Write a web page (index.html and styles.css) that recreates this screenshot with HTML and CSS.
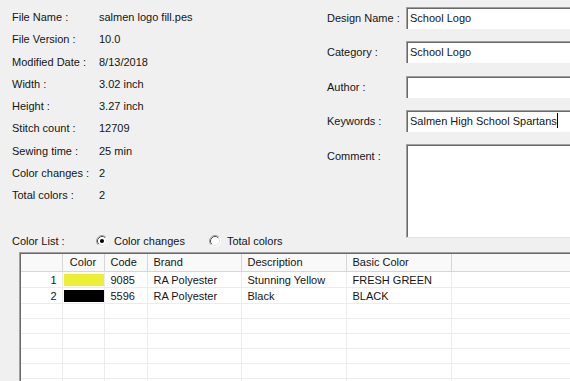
FILE: index.html
```html
<!DOCTYPE html>
<html>
<head>
<meta charset="utf-8">
<link rel="stylesheet" href="styles.css">
</head>
<body>
<div class="top">
  <div class="left">
    <div class="info">
      <div class="row"><span class="lbl">File Name :</span><span>salmen logo fill.pes</span></div>
      <div class="row"><span class="lbl">File Version :</span><span>10.0</span></div>
      <div class="row"><span class="lbl">Modified Date :</span><span>8/13/2018</span></div>
      <div class="row"><span class="lbl">Width :</span><span>3.02 inch</span></div>
      <div class="row"><span class="lbl">Height :</span><span>3.27 inch</span></div>
      <div class="row"><span class="lbl">Stitch count :</span><span>12709</span></div>
      <div class="row"><span class="lbl">Sewing time :</span><span>25 min</span></div>
      <div class="row"><span class="lbl">Color changes :</span><span>2</span></div>
      <div class="row"><span class="lbl">Total colors :</span><span>2</span></div>
    </div>
    <div class="colorlist">
      <span class="cl-lbl">Color List :</span>
      <span class="radio">
        <svg width="12" height="12" viewBox="0 0 12 12">
          <circle cx="6" cy="6" r="5" fill="#fff"/>
          <path d="M2.11 9.89 A5.5 5.5 0 0 1 9.89 2.11" fill="none" stroke="#a0a0a0" stroke-width="1"/>
          <path d="M9.89 2.11 A5.5 5.5 0 0 1 2.11 9.89" fill="none" stroke="#ffffff" stroke-width="1"/>
          <path d="M2.82 9.18 A4.5 4.5 0 0 1 9.18 2.82" fill="none" stroke="#505050" stroke-width="1"/>
          <path d="M9.18 2.82 A4.5 4.5 0 0 1 2.82 9.18" fill="none" stroke="#e3e3e3" stroke-width="1"/>
          <circle cx="6" cy="6" r="2" fill="#000"/>
        </svg>
        Color changes
      </span>
      <span class="radio second">
        <svg width="12" height="12" viewBox="0 0 12 12">
          <circle cx="6" cy="6" r="5" fill="#fff"/>
          <path d="M2.11 9.89 A5.5 5.5 0 0 1 9.89 2.11" fill="none" stroke="#a0a0a0" stroke-width="1"/>
          <path d="M9.89 2.11 A5.5 5.5 0 0 1 2.11 9.89" fill="none" stroke="#ffffff" stroke-width="1"/>
          <path d="M2.82 9.18 A4.5 4.5 0 0 1 9.18 2.82" fill="none" stroke="#505050" stroke-width="1"/>
          <path d="M9.18 2.82 A4.5 4.5 0 0 1 2.82 9.18" fill="none" stroke="#e3e3e3" stroke-width="1"/>
        </svg>
        Total colors
      </span>
    </div>
  </div>
  <div class="form">
    <div class="frow"><span class="flbl">Design Name :</span><div class="input">School Logo</div></div>
    <div class="frow"><span class="flbl">Category :</span><div class="input">School Logo</div></div>
    <div class="frow"><span class="flbl">Author :</span><div class="input"></div></div>
    <div class="frow"><span class="flbl">Keywords :</span><div class="input">Salmen High School Spartans<span class="caret"></span></div></div>
    <div class="frow comment"><span class="flbl">Comment :</span><div class="input area"></div></div>
  </div>
</div>
<div class="list">
  <table>
    <colgroup>
      <col class="c-num"><col class="c-color"><col class="c-code"><col class="c-brand"><col class="c-desc"><col class="c-basic"><col class="c-fill">
    </colgroup>
    <thead>
      <tr><th></th><th class="center">Color</th><th>Code</th><th>Brand</th><th>Description</th><th>Basic Color</th><th></th></tr>
    </thead>
    <tbody>
      <tr><td class="num">1</td><td class="sw"><div class="swatch yellow"></div></td><td>9085</td><td>RA Polyester</td><td>Stunning Yellow</td><td>FRESH GREEN</td><td></td></tr>
      <tr><td class="num">2</td><td class="sw"><div class="swatch black"></div></td><td>5596</td><td>RA Polyester</td><td>Black</td><td>BLACK</td><td></td></tr>
      <tr><td></td><td></td><td></td><td></td><td></td><td></td><td></td></tr>
      <tr><td></td><td></td><td></td><td></td><td></td><td></td><td></td></tr>
      <tr><td></td><td></td><td></td><td></td><td></td><td></td><td></td></tr>
      <tr><td></td><td></td><td></td><td></td><td></td><td></td><td></td></tr>
      <tr><td></td><td></td><td></td><td></td><td></td><td></td><td></td></tr>
      <tr><td></td><td></td><td></td><td></td><td></td><td></td><td></td></tr>
    </tbody>
  </table>
</div>
</body>
</html>
```
FILE: styles.css
```css
html, body {
  margin: 0;
  padding: 0;
  overflow: hidden;
  width: 570px;
  height: 381px;
  background: #f0f0f0;
}
body {
  font-family: "Liberation Sans", Arial, sans-serif;
  font-size: 11px;
  color: #151515;
}
.top {
  display: flex;
  height: 252px;
}
.left {
  flex: none;
  width: 315px;
  padding-left: 12px;
  display: flex;
  flex-direction: column;
}
.info {
  padding-top: 6px;
}
.row {
  display: flex;
  height: 22.25px;
  line-height: 22.25px;
}
.lbl {
  width: 87px;
  flex: none;
}
.colorlist {
  margin-top: auto;
  height: 18px;
  margin-bottom: 2px;
  display: flex;
  align-items: center;
  white-space: nowrap;
}
.cl-lbl {
  width: 84px;
}
.radio {
  display: inline-flex;
  align-items: center;
  gap: 6px;
}
.radio svg {
  display: block;
}
.radio.second {
  margin-left: 24px;
}
.form {
  flex: 1;
  min-width: 0;
  padding-top: 7px;
  display: flex;
  flex-direction: column;
  gap: 12.3px;
}
.frow {
  display: flex;
  align-items: center;
}
.frow.comment {
  align-items: flex-start;
}
.frow.comment .flbl {
  padding-top: 6px;
}
.flbl {
  width: 79px;
  flex: none;
  white-space: nowrap;
}
.input {
  flex: 1;
  min-width: 0;
  height: 22px;
  box-sizing: border-box;
  background: #fff;
  border-top: 1px solid #a0a0a0;
  border-left: 1px solid #a0a0a0;
  box-shadow: inset 1px 1px 0 #696969;
  padding: 0 3px;
  line-height: 21px;
  white-space: nowrap;
  overflow: hidden;
}
.input.area {
  height: 94px;
  border-bottom: 1px solid #e3e3e3;
}
.caret {
  display: inline-block;
  width: 1px;
  height: 15px;
  background: #000;
  vertical-align: -3px;
}
.list {
  margin-left: 19px;
  height: 129px;
  border-top: 1px solid #a0a0a0;
  border-left: 1px solid #a0a0a0;
  box-shadow: inset 1px 1px 0 #696969;
  padding: 1px 0 0 1px;
  background: #fff;
  overflow: hidden;
}
table {
  table-layout: fixed;
  border-collapse: collapse;
  width: 100%;
}
col.c-num { width: 41px; }
col.c-color { width: 42px; }
col.c-code { width: 43px; }
col.c-brand { width: 94px; }
col.c-desc { width: 105px; }
col.c-basic { width: 105px; }
th {
  height: 17px;
  padding: 0 0 0 6px;
  font-weight: normal;
  text-align: left;
  background: #f9f9f9;
  border-right: 1px solid #d6d6d6;
  border-bottom: 1px solid #d6d6d6;
  white-space: nowrap;
  box-sizing: border-box;
}
th:last-child, td:last-child {
  border-right: none;
}
th.center {
  text-align: center;
  padding: 0;
}
td {
  height: 15px;
  padding: 2px 0 0 6px;
  line-height: 13px;
  border-right: 1px solid #ececec;
  border-bottom: 1px solid #ececec;
  white-space: nowrap;
  box-sizing: border-box;
  vertical-align: middle;
}
td.num {
  text-align: right;
  padding-right: 5px;
}
td.sw {
  padding: 0;
}
.swatch {
  height: 12px;
  margin: 1px 0 0 1px;
  width: 41px;
}
.swatch.yellow { background: #eeee35; }
.swatch.black { background: #000; }
```
